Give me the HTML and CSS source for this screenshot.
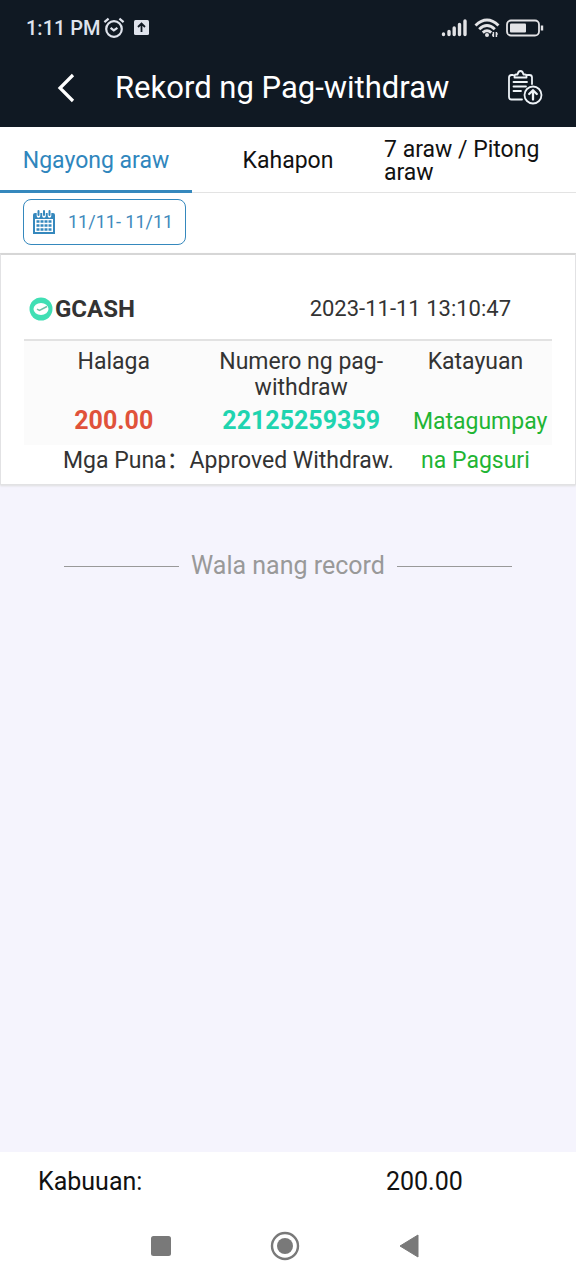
FILE: index.html
```html
<!DOCTYPE html>
<html lang="fil">
<head>
<meta charset="utf-8">
<meta name="viewport" content="width=device-width, initial-scale=1">
<title>Rekord ng Pag-withdraw</title>
<link rel="stylesheet" href="styles.css">
</head>
<body>
<header class="top">
  <div class="status-bar">
    <span class="clock">1:11 PM</span>
    <svg class="alarm" width="22" height="22" viewBox="0 0 22 22" fill="none" stroke="#dfe3ec" stroke-width="2.200"><circle cx="11" cy="12" r="7.800"/><path d="M7.600 10.800l3.200 2.600 3.600-2.600M1.400 5.200l4.200-3.600M20.600 5.200l-4.200-3.600"/></svg>
    <svg class="upload" width="15" height="15" viewBox="0 0 15 15"><rect width="15" height="15" rx="1.5" fill="#dfe3ec"/><path d="M7.5 12V4M4 7l3.500-3.500L11 7" fill="none" stroke="#101923" stroke-width="1.800"/></svg>
    <span class="system-icons">
      <svg width="27" height="18" viewBox="0 0 27 18" stroke="#e3e3e6" stroke-width="3.400" stroke-linecap="round"><path d="M2.500 15.500v-.5M8 15.500v-3M13.200 15.500v-6.500M18.500 15.500v-10M24 15.500v-13.500"/></svg>
      <svg width="26" height="20" viewBox="0 0 26 20" fill="none" stroke="#e3e3e6" stroke-width="2.900"><path d="M1.500 7.500Q13-3.500 24.500 7.500M5.200 11.200Q13 3.800 20.800 11.200M8.800 14.600Q13 10.800 17.200 14.600"/><circle cx="13" cy="17" r="2" fill="#e3e3e6" stroke="none"/><path d="M19.400 14v5M22.400 14v5M18 17h1.400M22.400 16h1.400" stroke-width="1.500"/></svg>
      <svg width="38" height="18" viewBox="0 0 38 18"><rect x="1" y="1.500" width="32" height="15" rx="4" fill="none" stroke="#e3e3e6" stroke-width="1.800"/><rect x="4" y="4.500" width="16" height="9" rx="1" fill="#e3e3e6"/><path d="M36 6.500v5" stroke="#e3e3e6" stroke-width="2.400"/></svg>
    </span>
  </div>
  <div class="title-bar">
    <button class="icon-button" type="button" aria-label="Bumalik"><svg width="18" height="30" viewBox="0 0 18 30"><path d="M16 2L3 15l13 13" fill="none" stroke="#fff" stroke-width="3.200"/></svg></button>
    <h1 class="title">Rekord ng Pag-withdraw</h1>
    <button class="icon-button" type="button" aria-label="Mag-withdraw"><svg width="36" height="36" viewBox="0 0 36 36" fill="none" stroke="#eef3f8" stroke-width="1.800" stroke-linecap="round" stroke-linejoin="round"><path d="M6 5H4.500Q2 5 2 7.500V27q0 2.500 2.500 2.500H15M20.500 5h2Q25 5 25 7.500V14M7.500 7.500V6q0-1.500 1.500-1.500h1.500C11 2 12 1 13.500 1S16 2 16.500 4.500H18q1.500 0 1.500 1.500v1.500zM6.500 12H20M6.500 16.500H19M6.500 21H14"/><circle cx="26" cy="25" r="8.500"/><path d="M26 29.500v-8.500M22.200 24l3.800-3.800 3.800 3.800" stroke-width="2.300"/></svg></button>
  </div>
</header>

<main class="content">
  <nav class="tabs">
    <button class="tab tab-active" type="button">Ngayong araw</button>
    <button class="tab" type="button">Kahapon</button>
    <button class="tab tab-wrap" type="button">7 araw / Pitong araw</button>
  </nav>
  <div class="filter">
    <button class="date-button" type="button">
      <svg width="22" height="24" viewBox="0 0 22 24"><path d="M0 5q0-2 2-2h18q2 0 2 2v19H0z" fill="#3588bd"/><path d="M5.500 2v4M11 2v4M16.500 2v4" stroke="#fff" stroke-width="3.600" stroke-linecap="round"/><path d="M5.500 1v4M11 1v4M16.500 1v4" stroke="#3588bd" stroke-width="2" stroke-linecap="round"/><path d="M2 9h18v13H2z" fill="#fff"/><path d="M3.500 11.500h15M3.500 15.500h15M3.500 19.500h15" stroke="#3588bd" stroke-width="2.600" stroke-dasharray="3 1"/></svg>
      <span>11/11- 11/11</span>
    </button>
  </div>
  <article class="card">
    <div class="card-head">
      <svg width="24" height="24" viewBox="0 0 24 24"><circle cx="12" cy="12" r="11.500" fill="#40dfb4"/><ellipse cx="12" cy="12" rx="7.500" ry="6" fill="#fff"/><path d="M8 12.200l2.500 1.300L18 9.500" fill="none" stroke="#6fbfa6" stroke-width="1.500"/></svg>
      <strong class="bank">GCASH</strong>
      <time class="date" datetime="2023-11-11T13:10:47">2023-11-11 13:10:47</time>
    </div>
    <table class="record">
      <thead>
        <tr><th class="col-amount" scope="col">Halaga</th><th class="col-number" scope="col">Numero ng pag-withdraw</th><th class="col-state" scope="col">Katayuan</th></tr>
      </thead>
      <tbody>
        <tr class="values"><td class="amount">200.00</td><td class="number">22125259359</td><td class="state" rowspan="2">Matagumpay na Pagsuri</td></tr>
        <tr><td class="remark" colspan="2">Mga Puna：Approved Withdraw.</td></tr>
      </tbody>
    </table>
  </article>
  <p class="end">Wala nang record</p>
</main>

<footer class="bottom">
  <div class="total"><span class="total-label">Kabuuan:</span><span>200.00</span></div>
  <nav class="system-nav">
    <button class="icon-button" type="button" aria-label="Mga kamakailang app"><svg width="22" height="22" viewBox="0 0 22 22"><rect x="1" y="1" width="20" height="20" rx="2.500" fill="#797979"/></svg></button>
    <button class="icon-button" type="button" aria-label="Home"><svg width="30" height="30" viewBox="0 0 30 30"><circle cx="15" cy="15" r="13" fill="none" stroke="#797979" stroke-width="2.400"/><circle cx="15" cy="15" r="8" fill="#797979"/></svg></button>
    <button class="icon-button" type="button" aria-label="Bumalik"><svg width="22" height="26" viewBox="0 0 22 26"><path d="M20 2v22L2 13z" fill="#797979" stroke="#797979" stroke-linejoin="round"/></svg></button>
  </nav>
</footer>
</body>
</html>
```
FILE: styles.css
```css
* { box-sizing: border-box; }
body {
  margin: 0;
  min-height: 100vh;
  display: flex;
  flex-direction: column;
  background: #f5f4fd;
  color: #333;
  font: 23px/26px Roboto, "Noto Sans CJK SC", sans-serif;
}
button {
  font: inherit;
  color: inherit;
  background: none;
  border: 0;
  padding: 0;
}
svg { display: block; flex: none; }
.icon-button { display: flex; }

.top { background: #101923; padding-bottom: 6px; }
.status-bar {
  display: flex;
  align-items: center;
  height: 55px;
  padding: 0 32px 0 26px;
  color: #dfe3ec;
  font-size: 20px;
  font-weight: 500;
}
.alarm { margin-left: 2px; }
.upload { margin-left: 9px; }
.system-icons { display: flex; align-items: center; gap: 6px; margin-left: auto; }
.title-bar {
  display: flex;
  align-items: center;
  height: 66px;
  padding: 0 33px 0 57px;
}
.title {
  flex: 1;
  margin: 0 0 0 40px;
  color: #fff;
  font-size: 31px;
  font-weight: 400;
}

.content { flex: 1; }
.tabs {
  display: grid;
  grid-template-columns: repeat(3, 1fr);
  height: 66px;
  background: #fff;
}
.tab {
  padding-top: 2px;
  color: #111;
  line-height: 23px;
  border-bottom: 1px solid #e3e3e3;
}
.tab-active { padding-top: 4px; color: #2f86bd; border-bottom: 3px solid #3588bd; }
.tab-wrap { text-align: left; padding-right: 16px; }

.filter { padding: 6px 23px 8px; background: #fff; }
.date-button {
  display: flex;
  align-items: center;
  gap: 13px;
  height: 46px;
  padding: 0 12px 0 9px;
  border: 1px solid #3588bd;
  border-radius: 8px;
  color: #3f8abc;
  font-size: 18px;
}

.card {
  padding: 0 23px 4px;
  background: #fff;
  border: 1px solid #e2e2e4;
  border-top: 2px solid #d6d6d6;
  box-shadow: 0 1px 2px #ddd;
}
.card-head {
  display: flex;
  align-items: center;
  height: 86px;
  padding: 23px 41px 0 5px;
  border-bottom: 2px solid #e2e2e2;
}
.bank { margin-left: 2px; font-size: 24px; }
.date { margin-left: auto; font-size: 22px; }

.record { width: 100%; border-collapse: collapse; table-layout: fixed; }
.record th { padding: 8px 0 0; font-weight: 400; vertical-align: top; background: #fbfbfb; }
.record td { padding: 0; text-align: center; vertical-align: top; line-height: 39px; }
.col-amount { width: 34%; }
.col-number { width: 37%; }
.col-state { width: 29%; }
.values { height: 44px; font-size: 25px; font-weight: 700; }
.record .amount { color: #e0523a; background: #fbfbfb; }
.record .number { color: #1fd4b0; background: #fbfbfb; }
.record .state {
  padding: 1px 14px 0;
  color: #1fb534;
  font-size: 23px;
  font-weight: 400;
  background: linear-gradient(#fbfbfb 44px, #fff 44px);
}
.record .remark { padding: 1px 0 0 39px; text-align: left; line-height: 30px; }

.end {
  display: flex;
  align-items: center;
  gap: 12px;
  margin: 68px 64px 0;
  color: #999;
  font-size: 25px;
}
.end::before, .end::after { content: ""; flex: 1; border-top: 1px solid #999; }

.bottom { background: #fff; }
.total {
  display: grid;
  grid-template-columns: 67% 33%;
  padding: 17px 0;
  color: #111;
  font-size: 25px;
}
.total-label { padding-left: 38px; }
.system-nav {
  display: flex;
  align-items: center;
  justify-content: space-between;
  height: 68px;
  padding: 0 26% 1px;
  padding-right: 27%;
}
```
